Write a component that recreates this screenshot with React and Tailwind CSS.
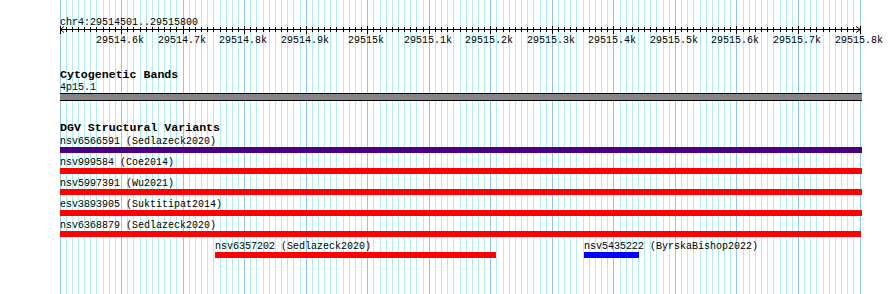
import React from 'react';

// 1300 bp over 800 px, guide every 10 bp
const px = (i) => Math.round(59.5 + (i * 800) / 130) + 0.5;
const ticks = Array.from({ length: 131 }, (_, i) => i);

const tickLabel = (i) => {
  const k = (29514500 + i * 10) / 1000;
  return `${Number.isInteger(k) ? k : k.toFixed(1)}k`;
};

const variants = [
  { label: 'nsv6566591 (Sedlazeck2020)', width: 802, color: '#4b0082' },
  { label: 'nsv999584 (Coe2014)', width: 802, color: '#ff0000' },
  { label: 'nsv5997391 (Wu2021)', width: 802, color: '#ff0000' },
  { label: 'esv3893905 (Suktitipat2014)', width: 802, color: '#ff0000' },
  { label: 'nsv6368879 (Sedlazeck2020)', width: 801, color: '#ff0000' },
];

const lastRow = [
  { label: 'nsv6357202 (Sedlazeck2020)', gap: 155, width: 281, color: '#ff0000' },
  { label: 'nsv5435222 (ByrskaBishop2022)', gap: 88, width: 55, color: '#0000ff' },
];

function Feature({ label, width, color, gap = 0 }) {
  return (
    <div className="shrink-0" style={{ width, marginLeft: gap }}>
      <div className="h-[15px] pt-[4px] text-[10px] leading-[11px] whitespace-pre">{label}</div>
      <div className="h-[6px]" style={{ backgroundColor: color }} />
    </div>
  );
}

export default function App() {
  return (
    <div className="relative w-[890px] h-[294px] overflow-hidden bg-white text-black font-['Liberation_Mono',monospace]">
      {/* guidelines */}
      <svg className="absolute inset-0" width="890" height="294" shapeRendering="crispEdges">
        {ticks.map((i) => (
          <line
            key={i}
            x1={px(i)}
            x2={px(i)}
            y1="0"
            y2="294"
            stroke={i % 10 === 0 ? '#8ec8ee' : '#aeeef0'}
            strokeWidth="1"
          />
        ))}
      </svg>

      <div className="relative">
        <div className="pl-[60px] pt-[18px] text-[10px] leading-[10px]">chr4:29514501..29515800</div>

        {/* ruler */}
        <svg className="block -mt-[2px]" width="890" height="20" shapeRendering="crispEdges">
          <line x1="60" x2="861" y1="3.5" y2="3.5" stroke="#000" />
          {ticks.map((i) => (
            <line
              key={i}
              x1={px(i)}
              x2={px(i)}
              y1={i % 10 === 0 ? 0 : 1}
              y2={i % 10 === 0 ? 8 : 6}
              stroke="#000"
            />
          ))}
          <polyline points="64,0.5 60.5,3.5 64,6.5" fill="none" stroke="#000" shapeRendering="auto" />
          <polyline points="856,0.5 860.5,3.5 856,6.5" fill="none" stroke="#000" shapeRendering="auto" />
          {ticks
            .filter((i) => i > 0 && i % 10 === 0)
            .map((i) => (
              <text
                key={i}
                x={px(i) - 1.5}
                y="17"
                textAnchor="middle"
                fontFamily="Liberation Mono, monospace"
                fontSize="10"
                fill="#000"
              >
                {tickLabel(i)}
              </text>
            ))}
        </svg>

        <div className="pl-[60px] mt-[24px] text-[11.6px] font-bold leading-[10px]">Cytogenetic Bands</div>
        <div className="pl-[60px] pt-[2px] text-[10px] leading-[11px]">4p15.1</div>
        <div className="ml-[60px] w-[802px] h-[8px] border-y border-black bg-[#858585]" />

        <div className="pl-[60px] mt-[22px] text-[11.6px] font-bold leading-[9px]">DGV Structural Variants</div>
        <div className="pl-[60px] flex flex-col">
          {variants.map((v) => (
            <Feature key={v.label} {...v} />
          ))}
          <div className="flex">
            {lastRow.map((v) => (
              <Feature key={v.label} {...v} />
            ))}
          </div>
        </div>
      </div>
    </div>
  );
}
